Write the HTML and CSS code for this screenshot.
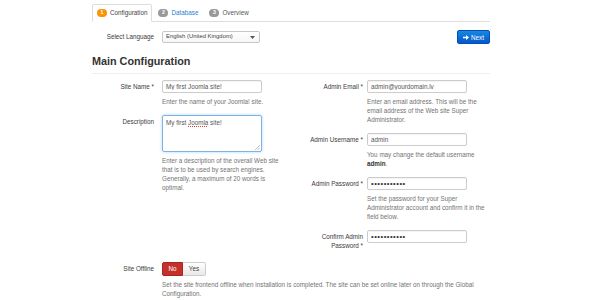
FILE: index.html
```html
<!DOCTYPE html>
<html>
<head>
<meta charset="utf-8">
<link rel="stylesheet" href="styles.css">
</head>
<body>
<div class="page">
  <ul class="tabs">
    <li class="tab active"><span class="badge orange">1</span><span>Configuration</span></li>
    <li class="tab"><span class="badge">2</span><a class="tab-link">Database</a></li>
    <li class="tab"><span class="badge">3</span><span>Overview</span></li>
  </ul>

  <div class="lang-row">
    <label class="lbl">Select Language</label>
    <div class="select">
      <span>English (United Kingdom)</span>
      <svg class="caret" width="5" height="3" viewBox="0 0 5 3"><path d="M0 0H5L2.5 3Z" fill="#555"/></svg>
    </div>
    <button class="btn-next">
      <svg width="6" height="5" viewBox="0 0 6 5"><path d="M0 1.7H3V0L6 2.5L3 5V3.3H0Z" fill="#fff"/></svg>
      <span>Next</span>
    </button>
  </div>

  <h3 class="heading">Main Configuration</h3>

  <div class="cols">
    <div class="col col-left">
      <div class="group">
        <label class="lbl">Site Name *</label>
        <div class="controls">
          <input class="input" type="text" value="My first Joomla site!">
          <p class="help">Enter the name of your Joomla! site.</p>
        </div>
      </div>
      <div class="group">
        <label class="lbl">Description</label>
        <div class="controls">
          <div class="textarea">My first <span class="spell">Joomla</span> site!
            <svg class="grip" width="5" height="5" viewBox="0 0 5 5"><path d="M5 0L0 5M5 2.5L2.5 5" stroke="#aaa" stroke-width="0.7"/></svg>
          </div>
          <p class="help">Enter a description of the overall Web site that is to be used by search engines. Generally, a maximum of 20 words is optimal.</p>
        </div>
      </div>
    </div>

    <div class="col col-right">
      <div class="group">
        <label class="lbl">Admin Email *</label>
        <div class="controls">
          <input class="input" type="text" value="admin@yourdomain.lv">
          <p class="help">Enter an email address. This will be the email address of the Web site Super Administrator.</p>
        </div>
      </div>
      <div class="group">
        <label class="lbl">Admin Username *</label>
        <div class="controls">
          <input class="input" type="text" value="admin">
          <p class="help">You may change the default username <strong>admin</strong>.</p>
        </div>
      </div>
      <div class="group">
        <label class="lbl">Admin Password *</label>
        <div class="controls">
          <input class="input pass" type="password" value="abcdefghijk">
          <p class="help">Set the password for your Super Administrator account and confirm it in the field below.</p>
        </div>
      </div>
      <div class="group">
        <label class="lbl">Confirm Admin Password *</label>
        <div class="controls">
          <input class="input pass" type="password" value="abcdefghijk">
        </div>
      </div>
    </div>
  </div>

  <div class="group offline">
    <label class="lbl">Site Offline</label>
    <div class="controls">
      <div class="toggle">
        <span class="tbtn no">No</span><span class="tbtn yes">Yes</span>
      </div>
      <p class="help">Set the site frontend offline when installation is completed. The site can be set online later on through the Global Configuration.</p>
    </div>
  </div>
</div>
</body>
</html>
```

FILE: styles.css
```css
html, body {
  margin: 0;
  padding: 0;
  background: #fff;
}

body {
  font-family: "Liberation Sans", Arial, sans-serif;
  font-size: 6.3px;
  line-height: 9.2px;
  color: #3a3a3a;
}

.page {
  margin-left: 92px;
  width: 398px;
  padding-top: 4px;
}

/* Tabs */
.tabs {
  display: flex;
  list-style: none;
  margin: 0;
  padding: 0;
  border-bottom: 1px solid #ddd;
}

.tab {
  display: flex;
  align-items: center;
  gap: 3px;
  height: 16px;
  padding: 0 4px;
  margin-right: 1px;
  margin-bottom: -1px;
  border: 1px solid transparent;
  border-radius: 2px 2px 0 0;
  color: #555;
}

.tab.active {
  border-color: #ddd #ddd transparent;
  background: #fff;
  color: #444;
}

.tab-link {
  color: #1f7fcf;
}

.badge {
  display: inline-flex;
  align-items: center;
  justify-content: center;
  width: 10px;
  height: 8px;
  border-radius: 4px;
  background: #999;
  color: #fff;
  font-size: 5.2px;
  font-weight: bold;
}

.badge.orange {
  background: #f89406;
}

/* Language row */
.lang-row {
  display: flex;
  align-items: center;
  margin-top: 8px;
  height: 14px;
}

.lang-row .lbl {
  width: 62px;
  margin-right: 8px;
  text-align: right;
}

.select {
  box-sizing: border-box;
  width: 98px;
  height: 12px;
  display: flex;
  align-items: center;
  justify-content: space-between;
  padding: 0 4px 0 3px;
  border: 1px solid #c8c8c8;
  border-radius: 2px;
  background: linear-gradient(#fff, #f6f6f6);
  color: #444;
  font-size: 5.9px;
}

.btn-next {
  margin-left: auto;
  box-sizing: border-box;
  width: 33px;
  height: 14px;
  display: flex;
  align-items: center;
  justify-content: center;
  gap: 2px;
  padding: 0;
  border: 1px solid #0550b8;
  border-radius: 2px;
  background: linear-gradient(#1689e0, #0556cb);
  color: #fff;
  font-family: "Liberation Sans", Arial, sans-serif;
  font-size: 6.3px;
}

/* Heading */
.heading {
  margin: 11px 0 0;
  padding-bottom: 5px;
  font-size: 10.8px;
  line-height: 13px;
  font-weight: bold;
  color: #333;
  border-bottom: 1px solid #eee;
}

/* Columns */
.cols {
  display: grid;
  grid-template-columns: 194px 194px;
  column-gap: 10px;
  margin-top: 6px;
}

.group {
  display: grid;
  align-items: start;
  margin-bottom: 9.5px;
}

.col-left .group,
.offline {
  grid-template-columns: 62px 1fr;
  column-gap: 8px;
}

.col-right .group {
  grid-template-columns: 67px 1fr;
  column-gap: 4px;
}

.col-right .group + .group {
  margin-top: -0.5px;
}

.group .lbl {
  text-align: right;
  padding-top: 2px;
}

.input {
  display: block;
  box-sizing: border-box;
  width: 100px;
  height: 13px;
  margin: 0;
  padding: 0 3px;
  border: 1px solid #ccc;
  border-radius: 2px;
  background: #fff;
  color: #555;
  font-family: "Liberation Sans", Arial, sans-serif;
  font-size: 6.3px;
  box-shadow: inset 0 1px 1px rgba(0, 0, 0, 0.05);
}

.input.pass {
  font-size: 7.6px;
  letter-spacing: 0.5px;
  color: #333;
}

.textarea {
  position: relative;
  box-sizing: border-box;
  width: 100px;
  height: 37px;
  padding: 2px 3px;
  border: 1px solid #7fb2e5;
  border-radius: 2px;
  color: #555;
  box-shadow: 0 0 3px rgba(82, 168, 236, 0.5);
}

.spell {
  text-decoration: underline dotted #e33;
  text-underline-offset: 1px;
}

.grip {
  position: absolute;
  right: 1px;
  bottom: 1px;
}

.help {
  margin: 3.5px 0 0;
  color: #737373;
}

.help strong {
  color: #333;
}

/* Offline */
.offline {
  margin-top: 2px;
}

.offline .lbl {
  padding-top: 1.5px;
}

.toggle {
  display: flex;
  height: 14px;
}

.tbtn {
  box-sizing: border-box;
  display: flex;
  align-items: center;
  justify-content: center;
  height: 14px;
}

.tbtn.no {
  width: 21px;
  background: #c5302b;
  color: #fff;
  border: 1px solid #a52723;
  border-radius: 2px 0 0 2px;
}

.tbtn.yes {
  width: 23px;
  background: linear-gradient(#fff, #e8e8e8);
  color: #444;
  border: 1px solid #ccc;
  border-left: none;
  border-radius: 0 2px 2px 0;
}
```
